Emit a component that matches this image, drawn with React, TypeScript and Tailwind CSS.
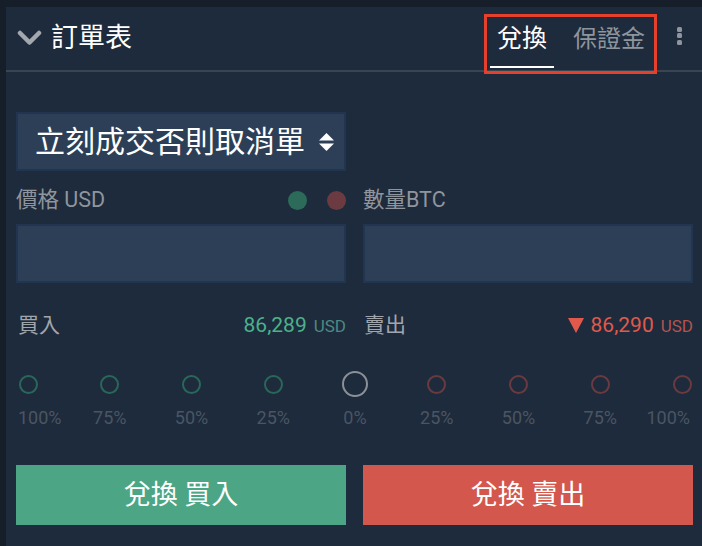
const font = { fontFamily: "Roboto, 'Noto Sans CJK TC', sans-serif" }

const steps = [
  { label: "100%", side: "buy" },
  { label: "75%", side: "buy" },
  { label: "50%", side: "buy" },
  { label: "25%", side: "buy" },
  { label: "0%", side: "mid" },
  { label: "25%", side: "sell" },
  { label: "50%", side: "sell" },
  { label: "75%", side: "sell" },
  { label: "100%", side: "sell" },
]

function Chevron() {
  return (
    <svg width="25" height="17" viewBox="0 0 25 17" className="shrink-0">
      <polyline points="3,3 12.5,12.5 22,3" fill="none" stroke="#a3a8ae" strokeWidth="4.5" strokeLinecap="round" strokeLinejoin="round" />
    </svg>
  )
}

function UpDown() {
  return (
    <svg width="15" height="18" viewBox="0 0 15 18">
      <polygon points="7.5,0 15,7.5 0,7.5" fill="#ffffff" />
      <polygon points="0,10.5 15,10.5 7.5,18" fill="#ffffff" />
    </svg>
  )
}

export default function App() {
  return (
    <div className="w-[702px] h-[546px] overflow-hidden bg-[#151e29] pt-[7px] pl-[6px]" style={font}>
      <div className="relative h-full bg-[#1e2b3c]">
        {/* Header */}
        <div className="flex h-[65px] items-center border-b-2 border-[#3a4552] pl-[11px] pr-[20px]">
          <Chevron />
          <span className="ml-[9px] text-[27px] leading-none text-white">訂單表</span>
          <div className="ml-auto flex h-full items-stretch">
            <div className="relative flex items-center px-[7px]">
              <span className="text-[25px] leading-none text-white">兌換</span>
              <div className="absolute bottom-[2px] left-0 right-0 h-[2px] bg-white" />
            </div>
            <div className="ml-[12px] flex items-center px-[7px]">
              <span className="text-[24px] leading-none text-[#8f959c]">保證金</span>
            </div>
            <div className="ml-[25px] flex flex-col items-center justify-center gap-[1.5px] pb-[6px]">
              <span className="h-[5px] w-[5px] rounded-[1.5px] bg-[#8f959c]" />
              <span className="h-[5px] w-[5px] rounded-[1.5px] bg-[#8f959c]" />
              <span className="h-[5px] w-[5px] rounded-[1.5px] bg-[#8f959c]" />
            </div>
          </div>
          {/* annotation box */}
          <div className="pointer-events-none absolute left-[478px] top-[7px] h-[60px] w-[173px] border-[3px] border-[#e5402b]" />
        </div>

        <div className="pl-[10px] pr-[8px]">
          {/* Select */}
          <div className="mt-[40px] flex h-[59px] w-[330px] items-center justify-between border-2 border-[#213551] bg-[#2c3f57] pl-[17px] pr-[10px]">
            <span className="text-[30px] leading-none text-white">立刻成交否則取消單</span>
            <UpDown />
          </div>

          {/* Price / amount labels */}
          <div className="mt-[17px] flex h-[24px] gap-[17px]">
            <div className="flex w-[330px] items-center">
              <span className="text-[21.5px] leading-none text-[#8f959c]">價格 USD</span>
              <span className="ml-auto h-[19px] w-[19px] rounded-full bg-[#2c6a5a]" />
              <span className="ml-[20px] h-[19px] w-[19px] rounded-full bg-[#6c3a41]" />
            </div>
            <div className="flex w-[330px] items-center">
              <span className="text-[21.5px] leading-none text-[#8f959c]">數量BTC</span>
            </div>
          </div>

          {/* Inputs */}
          <div className="mt-[12px] flex gap-[17px]">
            <div className="h-[59px] w-[330px] border-2 border-[#213551] bg-[#2c3f57]" />
            <div className="h-[59px] w-[330px] border-2 border-[#213551] bg-[#2c3f57]" />
          </div>

          {/* Buy / sell price */}
          <div className="mt-[30px] flex h-[24px] gap-[17px]">
            <div className="flex w-[330px] items-center justify-between pl-[2px]">
              <span className="text-[21px] leading-none text-[#a1a6ac]">買入</span>
              <span className="flex items-baseline gap-[7px]">
                <span className="text-[21px] leading-none text-[#4bb28b]">86,289</span>
                <span className="text-[17px] leading-none text-[#4c8a82]">USD</span>
              </span>
            </div>
            <div className="flex w-[330px] items-center justify-between pl-[1px]">
              <span className="text-[21px] leading-none text-[#a1a6ac]">賣出</span>
              <span className="flex items-center gap-[7px]">
                <svg width="16" height="15" viewBox="0 0 16 15">
                  <polygon points="0,0 16,0 8,15" fill="#e0594b" />
                </svg>
                <span className="flex items-baseline gap-[7px]">
                  <span className="text-[21px] leading-none text-[#e0594b]">86,290</span>
                  <span className="text-[17px] leading-none text-[#b4534d]">USD</span>
                </span>
              </span>
            </div>
          </div>

          {/* Slider */}
          <div className="-ml-px mt-[33px] w-[680px]">
            <div className="flex h-[28px] items-center justify-between">
              {steps.map((s, i) => (
                <div key={i} className="flex w-[26px] items-center justify-center">
                  {s.side === "mid" ? (
                    <span className="h-[26px] w-[26px] rounded-full border-2 border-[#8b9097]" />
                  ) : (
                    <span
                      className={`h-[19px] w-[19px] rounded-full border-2 ${
                        s.side === "buy" ? "border-[#2b6759]" : "border-[#6a3a40]"
                      }`}
                    />
                  )}
                </div>
              ))}
            </div>
            <div className="mt-[10px] flex h-[20px] items-center justify-between">
              {steps.map((s, i) => (
                <div
                  key={i}
                  className={`flex w-[26px] whitespace-nowrap ${
                    i === 0 ? "justify-start pl-[3px]" : i === 8 ? "justify-end pr-[5px]" : "justify-center"
                  }`}
                >
                  <span className="text-[18px] leading-none text-[#4a5563]">{s.label}</span>
                </div>
              ))}
            </div>
          </div>

          {/* Buttons */}
          <div className="mt-[37px] flex gap-[17px]">
            <button className="flex h-[60px] w-[330px] items-center justify-center bg-[#4ca585] text-[27px] leading-none text-white">
              兌換 買入
            </button>
            <button className="flex h-[60px] w-[330px] items-center justify-center bg-[#d3574c] text-[27px] leading-none text-white">
              兌換 賣出
            </button>
          </div>
        </div>
      </div>
    </div>
  )
}
